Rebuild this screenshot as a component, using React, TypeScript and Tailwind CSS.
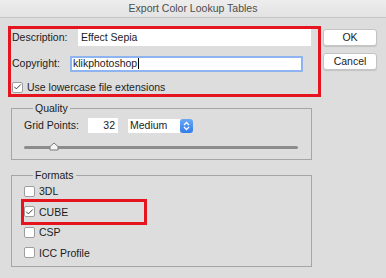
import { Check } from "lucide-react";

function Box({ checked = false }: { checked?: boolean }) {
  return (
    <span className="flex h-[11px] w-[11px] shrink-0 items-center justify-center rounded-[2px] border border-[#9e9e9e] bg-white">
      {checked && <Check className="h-[10px] w-[10px] text-[#333]" strokeWidth={2.5} />}
    </span>
  );
}

function Row({ label, checked }: { label: string; checked?: boolean }) {
  return (
    <div className="flex h-[20.5px] items-center gap-[4px]">
      <Box checked={checked} />
      <span>{label}</span>
    </div>
  );
}

export default function App() {
  return (
    <div className="h-[278px] w-[386px] overflow-hidden bg-[#dddddd] font-['Liberation_Sans',Arial,sans-serif] text-[10.5px] leading-none text-[#1c1c1c]">
      <div className="flex h-[18px] items-center justify-center border-b border-[#c6c6c6] bg-gradient-to-b from-[#ededed] to-[#e3e3e3] text-[#4d4d4d]">
        Export Color Lookup Tables
      </div>

      <div className="flex pl-[8px] pt-[8px]">
        <div className="w-[313px]">
          {/* annotated header block */}
          <div className="h-[71px] border-[3px] border-[#e5141f] pb-[2px] pl-[1px]">
            <div className="flex h-[17px] items-center">
              <span className="w-[66px]">Description:</span>
              <div className="flex h-[17px] w-[233px] items-center bg-white pl-[3px]">Effect Sepia</div>
            </div>
            <div className="mt-[10px] flex h-[15px] items-center">
              <span className="w-[58px]">Copyright:</span>
              <div className="flex h-[16px] w-[233px] items-center rounded-[1px] border-2 border-[#8db4f0] bg-white pl-[1px]">
                klikphotoshop
                <span className="ml-[1px] h-[11px] w-px bg-black" />
              </div>
            </div>
            <div className="mt-[11px] flex h-[10px] items-center gap-[4px]">
              <Box checked />
              <span>Use lowercase file extensions</span>
            </div>
          </div>

          <fieldset className="ml-[3px] mt-[4px] h-[59px] w-[301px] border border-[#a5a5a5] pl-[12px]">
            <legend className="ml-[9px] px-[2px] leading-[15px]">Quality</legend>
            <div className="mt-[2px] flex h-[15px] items-center">
              <span className="w-[64px]">Grid Points:</span>
              <div className="flex h-[15px] w-[30px] items-center justify-end bg-white pr-[3px]">32</div>
              <div className="ml-[10px] flex h-[14px] items-center">
                <div className="flex h-[14px] w-[52px] items-center bg-white pl-[2px]">Medium</div>
                <div className="flex h-[14px] w-[13px] items-center justify-center rounded-[3px] bg-gradient-to-b from-[#6aa9f7] to-[#2f7be9]">
                  <svg width="7" height="10" viewBox="0 0 7 10" fill="none" stroke="white" strokeWidth="1.3">
                    <path d="M1 4 L3.5 1.5 L6 4" />
                    <path d="M1 6 L3.5 8.5 L6 6" />
                  </svg>
                </div>
              </div>
            </div>
            <div className="relative mt-[9px] h-[9px] w-[274px]">
              <div className="absolute left-0 right-0 top-[4px] h-[3px] rounded-full bg-[#8c8c8c]" />
              <svg className="absolute left-[25px] top-0" width="10" height="9" viewBox="0 0 10 9">
                <path d="M1 8 L1 4.5 L5 1 L9 4.5 L9 8 Z" fill="#f4f4f4" stroke="#7a7a7a" strokeWidth="1" />
              </svg>
            </div>
          </fieldset>

          <fieldset className="ml-[3px] mt-[8px] h-[99px] w-[301px] border border-[#a5a5a5] pl-[12px]">
            <legend className="ml-[9px] px-[2px] leading-[15px]">Formats</legend>
            <div className="-mt-[2px]">
              <Row label="3DL" />
              <div className="relative">
                <Row label="CUBE" checked />
                <div className="absolute -left-[3px] top-[-3px] h-[26px] w-[126px] border-[3px] border-[#e5141f]" />
              </div>
              <Row label="CSP" />
              <Row label="ICC Profile" />
            </div>
          </fieldset>
        </div>

        <div className="ml-[2px] mt-[3px] flex flex-col gap-[7px]">
          <button className="h-[17px] w-[54px] rounded-[3px] border border-[#c4c4c4] bg-white shadow-[0_1px_1px_rgba(0,0,0,0.12)]">
            OK
          </button>
          <button className="h-[17px] w-[54px] rounded-[3px] border border-[#c4c4c4] bg-white shadow-[0_1px_1px_rgba(0,0,0,0.12)]">
            Cancel
          </button>
        </div>
      </div>
    </div>
  );
}
